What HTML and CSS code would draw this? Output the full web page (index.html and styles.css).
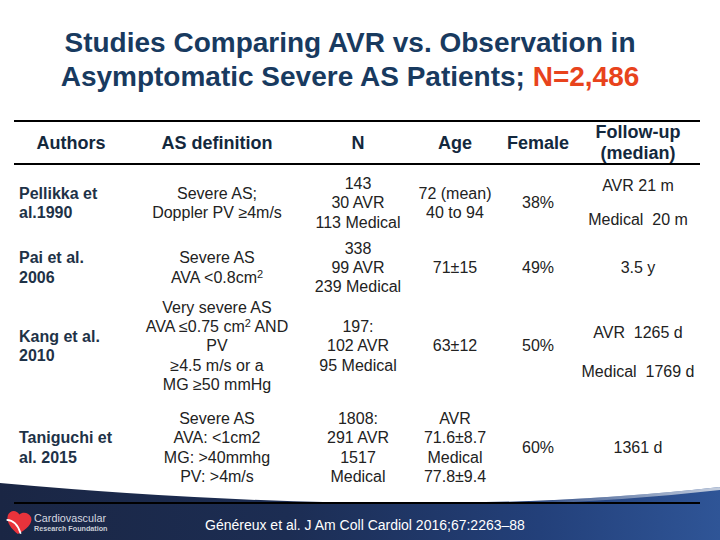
FILE: index.html
```html
<!DOCTYPE html>
<html>
<head>
<meta charset="utf-8">
<title>Studies Comparing AVR vs. Observation</title>
<link rel="stylesheet" href="styles.css">
</head>
<body>
<div class="slide">
  <h1 class="title">Studies Comparing AVR vs. Observation in<br>Asymptomatic Severe AS Patients; <span class="accent">N=2,486</span></h1>

  <div class="table">
    <div class="row head">
      <div class="cell"><p>Authors</p></div>
      <div class="cell"><p>AS definition</p></div>
      <div class="cell"><p>N</p></div>
      <div class="cell"><p>Age</p></div>
      <div class="cell"><p>Female</p></div>
      <div class="cell"><p>Follow-up<br>(median)</p></div>
    </div>

    <div class="row r1">
      <div class="cell author"><p>Pellikka et<br>al.1990</p></div>
      <div class="cell"><p>Severe AS;<br>Doppler PV ≥4m/s</p></div>
      <div class="cell"><p>143<br>30 AVR<br>113 Medical</p></div>
      <div class="cell"><p>72 (mean)<br>40 to 94</p></div>
      <div class="cell"><p>38%</p></div>
      <div class="cell fu"><p><span class="line">AVR 21 m</span><span class="line gap1">Medical&nbsp; 20 m</span></p></div>
    </div>

    <div class="row r2">
      <div class="cell author"><p>Pai et al.<br>2006</p></div>
      <div class="cell"><p>Severe AS<br>AVA &lt;0.8cm<sup>2</sup></p></div>
      <div class="cell"><p>338<br>99 AVR<br>239 Medical</p></div>
      <div class="cell"><p>71±15</p></div>
      <div class="cell"><p>49%</p></div>
      <div class="cell"><p>3.5 y</p></div>
    </div>

    <div class="row r3">
      <div class="cell author"><p>Kang et al.<br>2010</p></div>
      <div class="cell"><p>Very severe AS<br>AVA ≤0.75 cm<sup>2</sup> AND<br>PV<br>≥4.5 m/s or a<br>MG ≥50 mmHg</p></div>
      <div class="cell"><p>197:<br>102 AVR<br>95 Medical</p></div>
      <div class="cell"><p>63±12</p></div>
      <div class="cell"><p>50%</p></div>
      <div class="cell fu fu-low"><p><span class="line">AVR&nbsp; 1265 d</span><span class="line gap3">Medical&nbsp; 1769 d</span></p></div>
    </div>

    <div class="row r4">
      <div class="cell author"><p>Taniguchi et<br>al. 2015</p></div>
      <div class="cell"><p>Severe AS<br>AVA: &lt;1cm2<br>MG: &gt;40mmhg<br>PV: &gt;4m/s</p></div>
      <div class="cell"><p>1808:<br>291 AVR<br>1517<br>Medical</p></div>
      <div class="cell"><p>AVR<br>71.6±8.7<br>Medical<br>77.8±9.4</p></div>
      <div class="cell"><p>60%</p></div>
      <div class="cell"><p>1361 d</p></div>
    </div>
  </div>

  <div class="footer">
    <svg class="curve" width="720" height="21" viewBox="0 0 720 21" preserveAspectRatio="none">
      <defs>
        <linearGradient id="hl" gradientUnits="userSpaceOnUse" x1="720" y1="0" x2="520" y2="0">
          <stop offset="0" stop-color="#d6dce6" stop-opacity="0.9"/>
          <stop offset="1" stop-color="#d6dce6" stop-opacity="0"/>
        </linearGradient>
      </defs>
      <path d="M0 0 H720 V4 Q420 38 0 0 Z" fill="#ffffff"/>
      <path d="M720 5.5 Q420 39.5 0 1.5" fill="none" stroke="url(#hl)" stroke-width="3"/>
    </svg>
    <div class="footbar">
      <div class="logo">
        <svg class="heart" width="28" height="28" viewBox="0 0 30 28">
          <g transform="rotate(10 15 14)">
            <path d="M16 27 C9 23 1 17 2 9 C3 3 10 1 14 6 C17 2 24 2 27 7 C30 13 24 21 16 27 Z" fill="#e8333b"/>
            <path d="M1.5 14 C8 13 14 16 19 26" fill="none" stroke="#ffffff" stroke-width="1.8"/>
          </g>
        </svg>
        <div class="logo-text">
          <span class="logo-main">Cardiovascular</span>
          <span class="logo-sub">Research Foundation</span>
        </div>
      </div>
      <p class="citation">Généreux et al. J Am Coll Cardiol 2016;67:2263–88</p>
    </div>
  </div>
</div>
</body>
</html>
```

FILE: styles.css
```css
* {
  box-sizing: border-box;
  margin: 0;
  padding: 0;
}

html, body {
  width: 720px;
  height: 540px;
  overflow: hidden;
  background: #ffffff;
}

body {
  font-family: "Liberation Sans", Arial, sans-serif;
}

.slide {
  width: 720px;
  height: 540px;
  display: flex;
  flex-direction: column;
}

.title {
  padding: 26px 20px 0 0;
  font-size: 28px;
  line-height: 34px;
  font-weight: bold;
  color: #183a5f;
  text-align: center;
}

.accent {
  color: #e8431c;
}

.table {
  margin: 26px 0 0 14px;
  width: 686px;
  position: relative;
  z-index: 1;
  border-top: 2px solid #000;
  border-bottom: 2px solid #000;
}

.row {
  display: grid;
  grid-template-columns: 114px 178px 104px 90px 76px 124px;
}

.head {
  height: 43px;
  border-bottom: 2px solid #000;
}

.head .cell {
  font-size: 18px;
  font-weight: bold;
  line-height: 21px;
  color: #13283d;
}

.r1 { height: 72px; }
.r1 .cell { padding-top: 4px; }
.r2 { height: 61px; }
.r3 { height: 95px; }
.r4 { height: 109px; }

.cell {
  display: flex;
  align-items: center;
  justify-content: center;
  text-align: center;
  font-size: 16px;
  line-height: 19.2px;
  color: #222222;
  white-space: nowrap;
}

.cell sup {
  font-size: 11px;
  line-height: 0;
  vertical-align: 5px;
}

.author {
  justify-content: flex-start;
  text-align: left;
  padding-left: 5px;
  font-weight: bold;
  line-height: 19.5px;
  color: #1e3247;
}

.fu .line {
  display: block;
}

.fu .gap1 {
  margin-top: 14.8px;
}

.fu .gap3 {
  margin-top: 19.8px;
}

.r3 .fu-low {
  padding-top: 12px;
}

.footer {
  margin-top: -21px;
  height: 57px;
  flex: none;
  background: linear-gradient(90deg, #1a2644 0%, #1c2d53 40%, #23407a 75%, #2f5597 100%);
}

.curve {
  display: block;
  width: 720px;
  height: 21px;
}

.footbar {
  height: 36px;
  display: flex;
  align-items: center;
  padding-left: 5px;
}

.logo {
  display: flex;
  align-items: center;
  width: 99px;
  flex: none;
}

.heart {
  display: block;
  flex: none;
}

.logo-text {
  display: flex;
  flex-direction: column;
  margin-left: 1px;
  color: #d5d9e0;
  white-space: nowrap;
}

.logo-main {
  font-size: 10.8px;
  line-height: 12px;
}

.logo-sub {
  font-size: 7.2px;
  line-height: 9px;
  font-weight: bold;
  color: #c9ced6;
}

.citation {
  margin-left: 101px;
  padding-top: 6px;
  font-size: 14px;
  line-height: 16px;
  color: #ffffff;
  white-space: nowrap;
}
```
